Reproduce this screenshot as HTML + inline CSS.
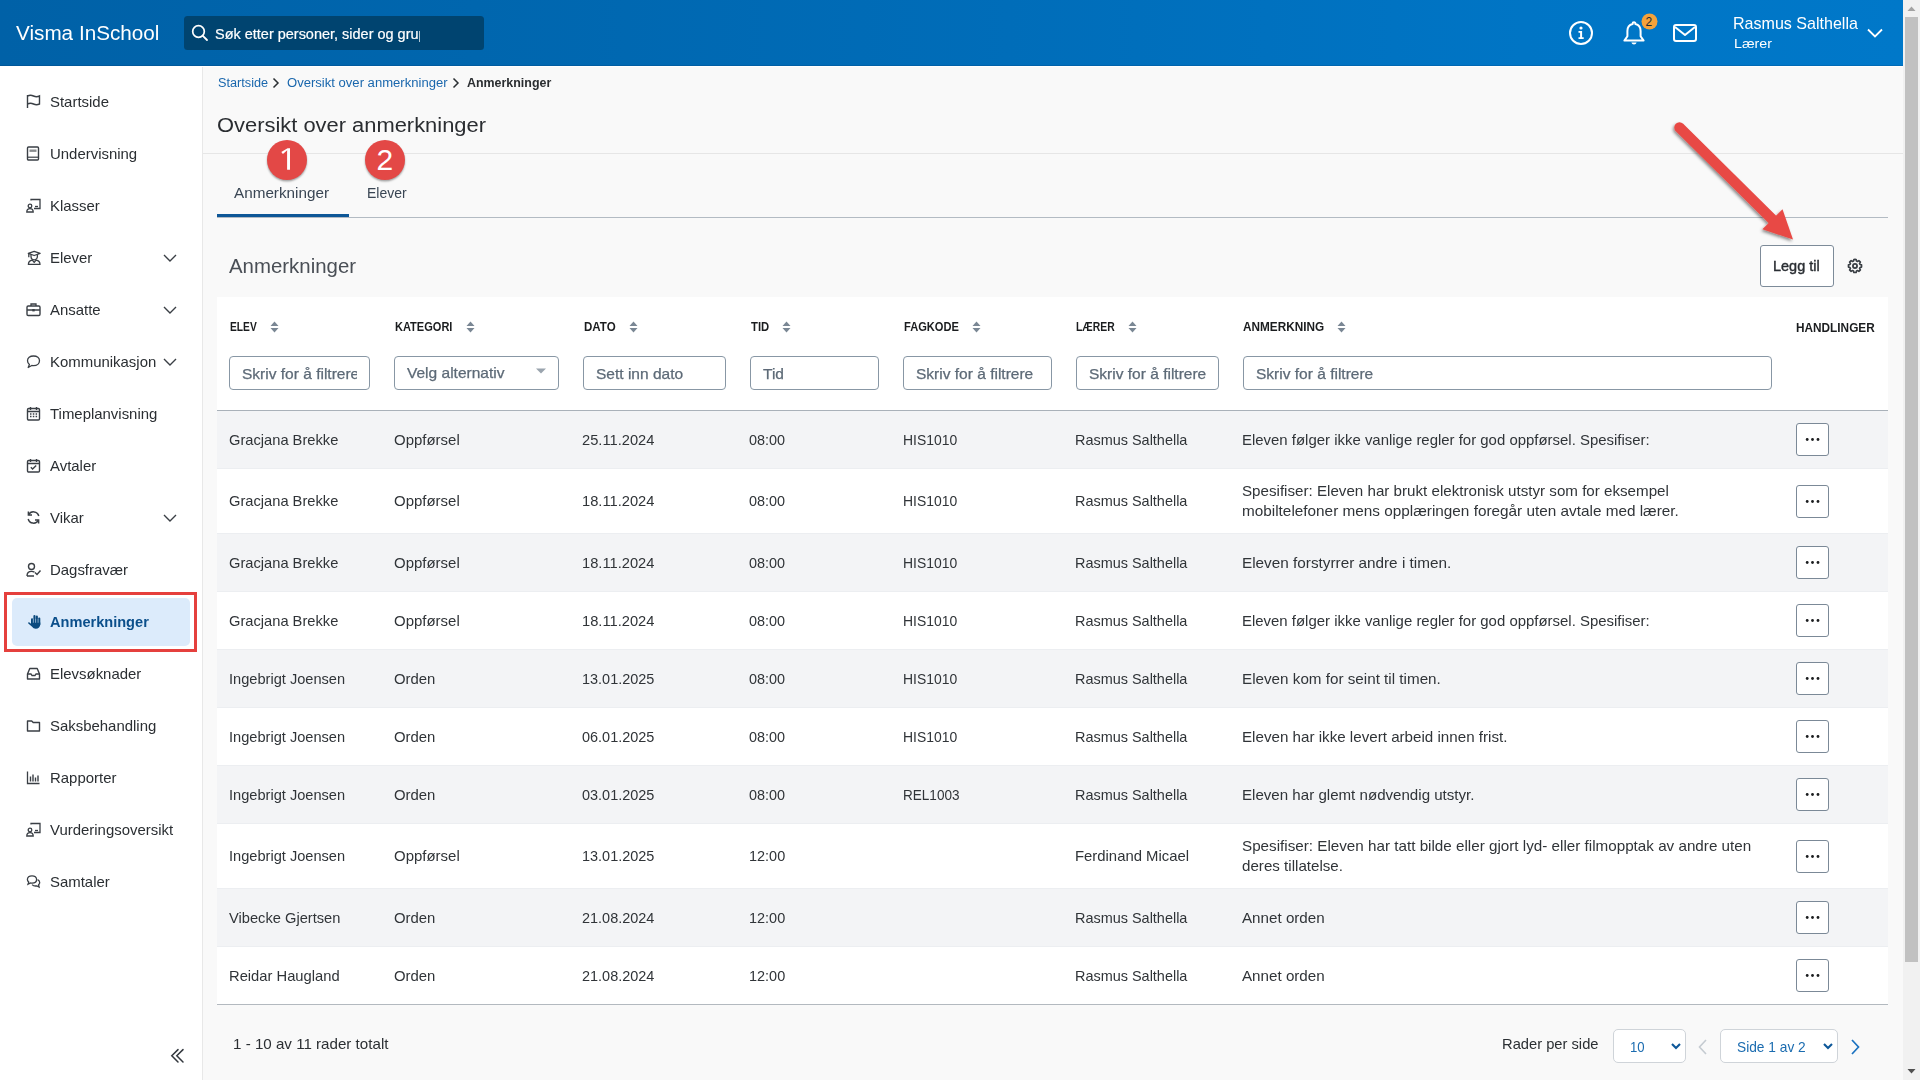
<!DOCTYPE html>
<html><head><meta charset="utf-8"><title>Anmerkninger</title>
<style>
html,body{margin:0;padding:0;width:1920px;height:1080px;overflow:hidden;background:#f9f9f9;font-family:"Liberation Sans", sans-serif;}
.t{position:absolute;white-space:nowrap;line-height:1;font-family:"Liberation Sans", sans-serif;}
.r{position:absolute;display:block;}
</style></head><body>
<div class="r" style="left:0px;top:0px;width:1903px;height:66px;background:linear-gradient(90deg,#0061a7 0%,#0066ae 25%,#006db9 53%,#0075c5 80%,#0078c9 100%);"></div>
<div class="t" style="left:15.55px;top:23.42px;font-size:20.76px;color:#ffffff;font-weight:400;transform:scaleX(0.9975);transform-origin:0 0;">Visma InSchool</div>
<div class="r" style="left:184px;top:16px;width:300px;height:34px;background:#004470;border-radius:3.5px;"></div>
<svg class="r" style="left:191px;top:24px;" width="18" height="18" viewBox="0 0 18 18"><circle cx="7.5" cy="7.5" r="5.8" fill="none" stroke="#fff" stroke-width="1.7"/><line x1="11.6" y1="11.6" x2="16" y2="16" stroke="#fff" stroke-width="1.8" stroke-linecap="round"/></svg>
<div class="r" style="left:184px;top:16px;width:236px;height:34px;overflow:hidden;">
<div class="t" style="left:31.10px;top:10.72px;font-size:14.5px;color:#fff;font-weight:400;transform:scaleX(0.9980);transform-origin:0 0;-webkit-text-stroke:.2px #fff;">Søk etter personer, sider og grupper</div>
</div>
<svg class="r" style="left:1568px;top:20px;" width="26" height="26" viewBox="0 0 26 26"><circle cx="13" cy="13" r="11" fill="none" stroke="#fff" stroke-width="2"/><circle cx="13" cy="8" r="1.6" fill="#fff"/><path d="M10.5 11h3.6v6.2h1.6v1.8h-5.2v-1.8h1.6v-4.4h-1.6z" fill="#fff"/></svg>
<svg class="r" style="left:1621px;top:19px;" width="26" height="28" viewBox="0 0 26 28"><path d="M13 3.2c-.9 0-1.4.6-1.4 1.3v.5C8.3 5.8 6.4 8.6 6.4 12v5.2L3.4 21.6h19.2l-3-4.4V12c0-3.4-1.9-6.2-5.2-7v-.5c0-.7-.5-1.3-1.4-1.3z" fill="none" stroke="#fff" stroke-width="2" stroke-linejoin="round"/><path d="M10.4 23.6h5.2c-.4 1.2-1.4 2-2.6 2s-2.2-.8-2.6-2z" fill="#fff"/></svg>
<svg class="r" style="left:1641px;top:13px;" width="17" height="17" viewBox="0 0 17 17"><circle cx="8.5" cy="8.5" r="8" fill="#f5a23a"/></svg>
<div class="t" style="left:1645.50px;top:16.34px;font-size:12px;color:#1e2a36;font-weight:400;">2</div>
<svg class="r" style="left:1672px;top:23px;" width="26" height="20" viewBox="0 0 26 20"><rect x="2" y="2" width="22" height="16" rx="2" fill="none" stroke="#fff" stroke-width="2"/><path d="M3 4l10 8 10-8" fill="none" stroke="#fff" stroke-width="2" stroke-linejoin="round"/></svg>
<div class="t" style="left:1733.30px;top:15.54px;font-size:16.6px;color:#fff;font-weight:400;transform:scaleX(0.9676);transform-origin:0 0;">Rasmus Salthella</div>
<div class="t" style="left:1733.80px;top:37.48px;font-size:13.6px;color:#fff;font-weight:400;transform:scaleX(1.0473);transform-origin:0 0;">Lærer</div>
<svg class="r" style="left:1866px;top:27px;" width="18" height="12" viewBox="0 0 18 12"><path d="M2 2.5l7 7 7-7" fill="none" stroke="#fff" stroke-width="1.8"/></svg>
<div class="r" style="left:0px;top:65px;width:1903px;height:1px;background:rgba(0,20,60,.12);"></div>
<div class="r" style="left:1903px;top:0px;width:17px;height:1080px;background:#f1f1f1;"></div>
<div class="r" style="left:1905px;top:17px;width:13px;height:945px;background:#c1c1c1;"></div>
<svg class="r" style="left:1903px;top:0px;" width="17" height="17" viewBox="0 0 17 17"><path d="M4.5 11h8L8.5 6.5z" fill="#a3a3a3"/></svg>
<svg class="r" style="left:1903px;top:1063px;" width="17" height="17" viewBox="0 0 17 17"><path d="M4.5 6h8L8.5 10.5z" fill="#505050"/></svg>
<div class="r" style="left:0px;top:66px;width:202px;height:1014px;background:#ffffff;"></div>
<div class="r" style="left:202px;top:66px;width:1px;height:1014px;background:#e8e8e8;"></div>
<div class="r" style="left:12px;top:598px;width:178px;height:48px;background:#dcebfb;border-radius:5px;"></div>
<svg class="r" style="left:26px;top:94px;" width="16" height="16" viewBox="0 0 16 16"><path d="M1.5 1v13M1.5 2c2-1 4-1 6 0s4 1 6 0v8c-2 1-4 1-6 0s-4-1-6 0" fill="none" stroke="#3a3f45" stroke-width="1.4"/></svg>
<div class="t" style="left:49.70px;top:94.92px;font-size:14.5px;color:#2b2f33;font-weight:400;transform:scaleX(1.0300);transform-origin:0 0;">Startside</div>
<svg class="r" style="left:26px;top:146px;" width="16" height="16" viewBox="0 0 16 16"><rect x="1.5" y="1" width="11" height="13" rx="1" fill="none" stroke="#3a3f45" stroke-width="1.4"/><path d="M1.5 11.2h11" stroke="#3a3f45" stroke-width="1.2"/><rect x="3.5" y="3.5" width="7" height="2.4" fill="#3a3f45" opacity=".6"/></svg>
<div class="t" style="left:49.70px;top:146.92px;font-size:14.5px;color:#2b2f33;font-weight:400;transform:scaleX(1.0300);transform-origin:0 0;">Undervisning</div>
<svg class="r" style="left:26px;top:198px;" width="16" height="16" viewBox="0 0 16 16"><path d="M5 2.5V1.5h9v9H8" fill="none" stroke="#3a3f45" stroke-width="1.3"/><path d="M9 8.5h3" stroke="#3a3f45" stroke-width="1.3"/><circle cx="4" cy="8" r="1.8" fill="none" stroke="#3a3f45" stroke-width="1.3"/><path d="M.8 14c0-2.4 1.4-3.4 3.2-3.4s3.2 1 3.2 3.4z" fill="none" stroke="#3a3f45" stroke-width="1.3"/></svg>
<div class="t" style="left:49.70px;top:198.92px;font-size:14.5px;color:#2b2f33;font-weight:400;transform:scaleX(1.0300);transform-origin:0 0;">Klasser</div>
<svg class="r" style="left:26px;top:250px;" width="16" height="16" viewBox="0 0 16 16"><path d="M2.3 3.4L8.2 1.3l5.9 2.1-5.9 2.1z" fill="none" stroke="#3a3f45" stroke-width="1.3" stroke-linejoin="round"/><path d="M2.8 3.6v3.6" stroke="#3a3f45" stroke-width="1.3"/><path d="M5 5v1.6a3.2 3.2 0 0 0 6.4 0V5" fill="none" stroke="#3a3f45" stroke-width="1.3"/><path d="M2.4 14.4c0-2.6 1.8-4 3.9-4.3l1.9 2.3 1.9-2.3c2.1.3 3.9 1.7 3.9 4.3z" fill="none" stroke="#3a3f45" stroke-width="1.3" stroke-linejoin="round"/></svg>
<div class="t" style="left:49.70px;top:250.92px;font-size:14.5px;color:#2b2f33;font-weight:400;transform:scaleX(1.0300);transform-origin:0 0;">Elever</div>
<svg class="r" style="left:161px;top:252px;" width="18" height="12" viewBox="0 0 18 12"><path d="M3 3l6 6 6-6" fill="none" stroke="#3a3f45" stroke-width="1.4"/></svg>
<svg class="r" style="left:26px;top:302px;" width="16" height="16" viewBox="0 0 16 16"><rect x="1" y="4" width="13" height="9.5" rx="1.2" fill="none" stroke="#3a3f45" stroke-width="1.4"/><path d="M5 4V2h5v2M1 8h13" fill="none" stroke="#3a3f45" stroke-width="1.3"/><rect x="6.3" y="7" width="2.4" height="2.4" fill="#3a3f45"/></svg>
<div class="t" style="left:49.70px;top:302.92px;font-size:14.5px;color:#2b2f33;font-weight:400;transform:scaleX(1.0300);transform-origin:0 0;">Ansatte</div>
<svg class="r" style="left:161px;top:304px;" width="18" height="12" viewBox="0 0 18 12"><path d="M3 3l6 6 6-6" fill="none" stroke="#3a3f45" stroke-width="1.4"/></svg>
<svg class="r" style="left:26px;top:354px;" width="16" height="16" viewBox="0 0 16 16"><path d="M7.5 2C3.9 2 1.5 4 1.5 6.8c0 1.5.7 2.7 1.9 3.6L2.2 13.5l3.6-2c.5.1 1.1.2 1.7.2 3.6 0 6-2.1 6-4.9S11.1 2 7.5 2z" fill="none" stroke="#3a3f45" stroke-width="1.3" stroke-linejoin="round"/></svg>
<div class="t" style="left:49.70px;top:354.92px;font-size:14.5px;color:#2b2f33;font-weight:400;transform:scaleX(1.0300);transform-origin:0 0;">Kommunikasjon</div>
<svg class="r" style="left:161px;top:356px;" width="18" height="12" viewBox="0 0 18 12"><path d="M3 3l6 6 6-6" fill="none" stroke="#3a3f45" stroke-width="1.4"/></svg>
<svg class="r" style="left:26px;top:406px;" width="16" height="16" viewBox="0 0 16 16"><rect x="1.5" y="2.5" width="12" height="11.5" rx="1.2" fill="none" stroke="#3a3f45" stroke-width="1.4"/><path d="M4.5 1v3M10.5 1v3M1.5 5.5h12" stroke="#3a3f45" stroke-width="1.4"/><path d="M4 8h1.5M6.8 8h1.5M9.6 8h1.5M4 10.5h1.5M6.8 10.5h1.5M9.6 10.5h1.5" stroke="#3a3f45" stroke-width="1.3"/></svg>
<div class="t" style="left:49.70px;top:406.92px;font-size:14.5px;color:#2b2f33;font-weight:400;transform:scaleX(1.0300);transform-origin:0 0;">Timeplanvisning</div>
<svg class="r" style="left:26px;top:458px;" width="16" height="16" viewBox="0 0 16 16"><rect x="1.5" y="2.5" width="12" height="11.5" rx="1.2" fill="none" stroke="#3a3f45" stroke-width="1.4"/><path d="M4.5 1v3M10.5 1v3M1.5 5.5h12" stroke="#3a3f45" stroke-width="1.4"/><path d="M4.8 9.3l1.8 1.8 3.6-3.6" fill="none" stroke="#3a3f45" stroke-width="1.4"/></svg>
<div class="t" style="left:49.70px;top:458.92px;font-size:14.5px;color:#2b2f33;font-weight:400;transform:scaleX(1.0300);transform-origin:0 0;">Avtaler</div>
<svg class="r" style="left:26px;top:510px;" width="16" height="16" viewBox="0 0 16 16"><path d="M12.8 6A5.5 5.5 0 0 0 2.6 4.8M2.2 9a5.5 5.5 0 0 0 10.2 1.2" fill="none" stroke="#3a3f45" stroke-width="1.5"/><path d="M2.4 1.5v3.6H6M12.6 13.5V9.9H9" fill="none" stroke="#3a3f45" stroke-width="1.5"/></svg>
<div class="t" style="left:49.70px;top:510.92px;font-size:14.5px;color:#2b2f33;font-weight:400;transform:scaleX(1.0300);transform-origin:0 0;">Vikar</div>
<svg class="r" style="left:161px;top:512px;" width="18" height="12" viewBox="0 0 18 12"><path d="M3 3l6 6 6-6" fill="none" stroke="#3a3f45" stroke-width="1.4"/></svg>
<svg class="r" style="left:26px;top:562px;" width="16" height="16" viewBox="0 0 16 16"><circle cx="5.5" cy="4.5" r="3" fill="none" stroke="#3a3f45" stroke-width="1.4"/><path d="M1 14c0-3 2-4.6 4.5-4.6 1.2 0 2.3.3 3 .9M1 14h7" fill="none" stroke="#3a3f45" stroke-width="1.4"/><path d="M9 10.5l2 2 3.5-4" fill="none" stroke="#3a3f45" stroke-width="1.4"/></svg>
<div class="t" style="left:49.70px;top:562.92px;font-size:14.5px;color:#2b2f33;font-weight:400;transform:scaleX(1.0300);transform-origin:0 0;">Dagsfravær</div>
<svg class="r" style="left:26px;top:614px;" width="16" height="16" viewBox="0 0 16 16"><g fill="#0b4a7e"><rect x="5" y="4.2" width="2.1" height="7" rx="1.05"/><rect x="7.4" y="1" width="2.1" height="10" rx="1.05"/><rect x="9.8" y="1.6" width="2.1" height="9.5" rx="1.05"/><rect x="12.2" y="3.6" width="2.1" height="8" rx="1.05"/><path d="M5 8.5h9.3v1.8c0 2.7-1.9 4.5-4.5 4.5-1.7 0-2.8-.8-3.7-2L2.3 9.6c-.5-.6.3-1.6 1.1-1.1L5 9.8z"/></g><path d="M7.25 5v4M9.65 5v4M12.05 5v4" stroke="#dcebfb" stroke-width=".35"/></svg>
<div class="t" style="left:49.50px;top:614.92px;font-size:14.5px;color:#0b4f8b;font-weight:700;transform:scaleX(1.0051);transform-origin:0 0;">Anmerkninger</div>
<svg class="r" style="left:26px;top:666px;" width="16" height="16" viewBox="0 0 16 16"><path d="M1.5 8l2.3-5.5h7.4L13.5 8v5H1.5z" fill="none" stroke="#3a3f45" stroke-width="1.4" stroke-linejoin="round"/><path d="M1.5 8h3.5l1 1.5h3l1-1.5h3.5" fill="none" stroke="#3a3f45" stroke-width="1.3"/></svg>
<div class="t" style="left:49.70px;top:666.92px;font-size:14.5px;color:#2b2f33;font-weight:400;transform:scaleX(1.0300);transform-origin:0 0;">Elevsøknader</div>
<svg class="r" style="left:26px;top:718px;" width="16" height="16" viewBox="0 0 16 16"><path d="M1.5 3h4.2l1.5 1.5h6.3v8.5h-12z" fill="none" stroke="#3a3f45" stroke-width="1.4" stroke-linejoin="round"/></svg>
<div class="t" style="left:49.70px;top:718.92px;font-size:14.5px;color:#2b2f33;font-weight:400;transform:scaleX(1.0300);transform-origin:0 0;">Saksbehandling</div>
<svg class="r" style="left:26px;top:770px;" width="16" height="16" viewBox="0 0 16 16"><path d="M1.5 1.5v12h12" fill="none" stroke="#3a3f45" stroke-width="1.3"/><path d="M4.5 6.5v5M7 4.5v7M9.5 7.5v4M12 5.5v6" stroke="#3a3f45" stroke-width="1.4"/></svg>
<div class="t" style="left:49.70px;top:770.92px;font-size:14.5px;color:#2b2f33;font-weight:400;transform:scaleX(1.0300);transform-origin:0 0;">Rapporter</div>
<svg class="r" style="left:26px;top:822px;" width="16" height="16" viewBox="0 0 16 16"><path d="M5 2.5V1.5h9v9H8" fill="none" stroke="#3a3f45" stroke-width="1.3"/><path d="M9 8.5h3" stroke="#3a3f45" stroke-width="1.3"/><circle cx="4" cy="8" r="1.8" fill="none" stroke="#3a3f45" stroke-width="1.3"/><path d="M.8 14c0-2.4 1.4-3.4 3.2-3.4s3.2 1 3.2 3.4z" fill="none" stroke="#3a3f45" stroke-width="1.3"/></svg>
<div class="t" style="left:49.70px;top:822.92px;font-size:14.5px;color:#2b2f33;font-weight:400;transform:scaleX(1.0300);transform-origin:0 0;">Vurderingsoversikt</div>
<svg class="r" style="left:26px;top:874px;" width="16" height="16" viewBox="0 0 16 16"><path d="M6 1.8c-2.8 0-4.6 1.6-4.6 3.7 0 1 .5 1.9 1.3 2.6l-.7 2.2 2.6-1.3c.4.1.9.2 1.4.2 2.8 0 4.6-1.6 4.6-3.7S8.8 1.8 6 1.8z" fill="none" stroke="#3a3f45" stroke-width="1.3"/><path d="M11.6 5.6c1.3.6 2.1 1.7 2.1 2.9 0 .9-.4 1.7-1.1 2.3l.5 2.2-2.2-1.1c-.4.1-.8.1-1.2.1-1.5 0-2.8-.5-3.6-1.4" fill="none" stroke="#3a3f45" stroke-width="1.3"/></svg>
<div class="t" style="left:49.70px;top:874.92px;font-size:14.5px;color:#2b2f33;font-weight:400;transform:scaleX(1.0300);transform-origin:0 0;">Samtaler</div>
<div class="r" style="left:4px;top:592px;width:193px;height:60px;border:3px solid #e5403d;box-sizing:border-box;"></div>
<svg class="r" style="left:168px;top:1046px;" width="20" height="20" viewBox="0 0 20 20"><path d="M10 3.6l-6.2 6.2 6.2 6.2M15 3.6l-6.2 6.2 6.2 6.2" fill="none" stroke="#33383e" stroke-width="1.5" stroke-linecap="round"/></svg>
<div class="r" style="left:203px;top:66px;width:1700px;height:1014px;background:#f9f9f9;"></div>
<div class="r" style="left:0px;top:66px;width:1903px;height:1px;background:#ffffff;"></div>
<div class="t" style="left:217.70px;top:76.70px;font-size:12.45px;color:#1a67ad;font-weight:400;transform:scaleX(1.0198);transform-origin:0 0;">Startside</div>
<svg class="r" style="left:271px;top:77px;" width="10" height="12" viewBox="0 0 10 12"><path d="M2.5 1.5l4.5 4.5-4.5 4.5" fill="none" stroke="#2b2f33" stroke-width="1.5"/></svg>
<div class="t" style="left:287.10px;top:76.70px;font-size:12.45px;color:#1a67ad;font-weight:400;transform:scaleX(1.0509);transform-origin:0 0;">Oversikt over anmerkninger</div>
<svg class="r" style="left:451px;top:77px;" width="10" height="12" viewBox="0 0 10 12"><path d="M2.5 1.5l4.5 4.5-4.5 4.5" fill="none" stroke="#2b2f33" stroke-width="1.5"/></svg>
<div class="t" style="left:466.60px;top:76.70px;font-size:12.45px;color:#2a2d30;font-weight:700;transform:scaleX(0.9988);transform-origin:0 0;">Anmerkninger</div>
<div class="t" style="left:217.20px;top:115.02px;font-size:20.76px;color:#2a2d31;font-weight:400;transform:scaleX(1.0554);transform-origin:0 0;">Oversikt over anmerkninger</div>
<div class="r" style="left:203px;top:153px;width:1700px;height:1px;background:#e6e6e6;"></div>
<div class="t" style="left:234.30px;top:185.52px;font-size:14.5px;color:#3a4654;font-weight:400;transform:scaleX(1.0525);transform-origin:0 0;">Anmerkninger</div>
<div class="t" style="left:366.50px;top:185.52px;font-size:14.5px;color:#3a4654;font-weight:400;transform:scaleX(0.9658);transform-origin:0 0;">Elever</div>
<div class="r" style="left:217px;top:217px;width:1671px;height:1px;background:#b3bbc3;"></div>
<div class="r" style="left:217px;top:214px;width:132px;height:3px;background:#0e5797;"></div>
<div class="t" style="left:228.90px;top:255.52px;font-size:20.76px;color:#4a4f56;font-weight:400;transform:scaleX(0.9835);transform-origin:0 0;">Anmerkninger</div>
<div class="r" style="left:1760px;top:245px;width:74px;height:42px;background:#fff;border:1px solid #7d8b99;border-radius:3px;box-sizing:border-box;"></div>
<div class="t" style="left:1773.05px;top:258.52px;font-size:14.5px;color:#2a2e33;font-weight:400;transform:scaleX(0.9976);transform-origin:0 0;-webkit-text-stroke:.4px #2a2e33;">Legg til</div>
<svg class="r" style="left:1846px;top:257px;" width="18" height="18" viewBox="0 0 18 18"><g transform="translate(9 9) scale(.86) translate(-9 -9)"><path d="M9 1.2l1.3.2.4 1.8 1.2.5 1.6-1 1.8 1.8-1 1.6.5 1.2 1.8.4v2.6l-1.8.4-.5 1.2 1 1.6-1.8 1.8-1.6-1-1.2.5-.4 1.8H7.7l-.4-1.8-1.2-.5-1.6 1-1.8-1.8 1-1.6-.5-1.2-1.8-.4V7.7l1.8-.4.5-1.2-1-1.6 1.8-1.8 1.6 1 1.2-.5.4-1.8z" fill="none" stroke="#3a3f45" stroke-width="1.9" stroke-linejoin="round"/><circle cx="9" cy="9" r="2.4" fill="none" stroke="#3a3f45" stroke-width="2.1"/></g></svg>
<div class="r" style="left:217px;top:297px;width:1671px;height:707px;background:#fff;"></div>
<div class="r" style="left:217px;top:410px;width:1671px;height:1px;background:#a9b1b9;"></div>
<div class="r" style="left:217px;top:1004px;width:1671px;height:1px;background:#b3b9bf;"></div>
<div class="t" style="left:229.70px;top:320.70px;font-size:12.45px;color:#1b1d1f;font-weight:700;transform:scaleX(0.8241);transform-origin:0 0;">ELEV</div>
<svg class="r" style="left:269px;top:320px;" width="11" height="14" viewBox="0 0 11 14"><path d="M1.5 6L5.5 1.5 9.5 6z M1.5 8L5.5 12.5 9.5 8z" fill="#7a8794"/></svg>
<div class="t" style="left:395.30px;top:320.70px;font-size:12.45px;color:#1b1d1f;font-weight:700;transform:scaleX(0.8875);transform-origin:0 0;">KATEGORI</div>
<svg class="r" style="left:465px;top:320px;" width="11" height="14" viewBox="0 0 11 14"><path d="M1.5 6L5.5 1.5 9.5 6z M1.5 8L5.5 12.5 9.5 8z" fill="#7a8794"/></svg>
<div class="t" style="left:583.70px;top:320.70px;font-size:12.45px;color:#1b1d1f;font-weight:700;transform:scaleX(0.9289);transform-origin:0 0;">DATO</div>
<svg class="r" style="left:628px;top:320px;" width="11" height="14" viewBox="0 0 11 14"><path d="M1.5 6L5.5 1.5 9.5 6z M1.5 8L5.5 12.5 9.5 8z" fill="#7a8794"/></svg>
<div class="t" style="left:750.60px;top:320.70px;font-size:12.45px;color:#1b1d1f;font-weight:700;transform:scaleX(0.9074);transform-origin:0 0;">TID</div>
<svg class="r" style="left:781px;top:320px;" width="11" height="14" viewBox="0 0 11 14"><path d="M1.5 6L5.5 1.5 9.5 6z M1.5 8L5.5 12.5 9.5 8z" fill="#7a8794"/></svg>
<div class="t" style="left:904.30px;top:320.70px;font-size:12.45px;color:#1b1d1f;font-weight:700;transform:scaleX(0.8934);transform-origin:0 0;">FAGKODE</div>
<svg class="r" style="left:971px;top:320px;" width="11" height="14" viewBox="0 0 11 14"><path d="M1.5 6L5.5 1.5 9.5 6z M1.5 8L5.5 12.5 9.5 8z" fill="#7a8794"/></svg>
<div class="t" style="left:1076.20px;top:320.70px;font-size:12.45px;color:#1b1d1f;font-weight:700;transform:scaleX(0.8352);transform-origin:0 0;">LÆRER</div>
<svg class="r" style="left:1127px;top:320px;" width="11" height="14" viewBox="0 0 11 14"><path d="M1.5 6L5.5 1.5 9.5 6z M1.5 8L5.5 12.5 9.5 8z" fill="#7a8794"/></svg>
<div class="t" style="left:1243.05px;top:320.70px;font-size:12.45px;color:#1b1d1f;font-weight:700;transform:scaleX(0.9473);transform-origin:0 0;">ANMERKNING</div>
<svg class="r" style="left:1336px;top:320px;" width="11" height="14" viewBox="0 0 11 14"><path d="M1.5 6L5.5 1.5 9.5 6z M1.5 8L5.5 12.5 9.5 8z" fill="#7a8794"/></svg>
<div class="t" style="left:1796.30px;top:322.45px;font-size:12.45px;color:#1b1d1f;font-weight:700;transform:scaleX(0.9494);transform-origin:0 0;">HANDLINGER</div>
<div class="r" style="left:229px;top:356px;width:141px;height:34px;background:#fff;border:1px solid #8897a5;border-radius:4px;box-sizing:border-box;"></div>
<div class="r" style="left:230px;top:357px;width:127px;height:32px;overflow:hidden;">
<div class="t" style="left:11.80px;top:9.62px;font-size:14.5px;color:#5d6a77;font-weight:400;transform:scaleX(1.0700);transform-origin:0 0;-webkit-text-stroke:.25px #5d6a77;">Skriv for å filtrere</div>
</div>
<div class="r" style="left:394px;top:356px;width:165px;height:34px;background:#fff;border:1px solid #8897a5;border-radius:4px;box-sizing:border-box;"></div>
<div class="r" style="left:395px;top:357px;width:151px;height:32px;overflow:hidden;">
<div class="t" style="left:11.60px;top:8.62px;font-size:14.5px;color:#5d6a77;font-weight:400;transform:scaleX(1.0700);transform-origin:0 0;-webkit-text-stroke:.25px #5d6a77;">Velg alternativ</div>
</div>
<div class="r" style="left:583px;top:356px;width:143px;height:34px;background:#fff;border:1px solid #8897a5;border-radius:4px;box-sizing:border-box;"></div>
<div class="r" style="left:584px;top:357px;width:129px;height:32px;overflow:hidden;">
<div class="t" style="left:11.80px;top:9.62px;font-size:14.5px;color:#5d6a77;font-weight:400;transform:scaleX(1.0700);transform-origin:0 0;-webkit-text-stroke:.25px #5d6a77;">Sett inn dato</div>
</div>
<div class="r" style="left:750px;top:356px;width:129px;height:34px;background:#fff;border:1px solid #8897a5;border-radius:4px;box-sizing:border-box;"></div>
<div class="r" style="left:751px;top:357px;width:115px;height:32px;overflow:hidden;">
<div class="t" style="left:11.80px;top:9.62px;font-size:14.5px;color:#5d6a77;font-weight:400;transform:scaleX(1.0700);transform-origin:0 0;-webkit-text-stroke:.25px #5d6a77;">Tid</div>
</div>
<div class="r" style="left:903px;top:356px;width:149px;height:34px;background:#fff;border:1px solid #8897a5;border-radius:4px;box-sizing:border-box;"></div>
<div class="r" style="left:904px;top:357px;width:135px;height:32px;overflow:hidden;">
<div class="t" style="left:11.80px;top:9.62px;font-size:14.5px;color:#5d6a77;font-weight:400;transform:scaleX(1.0700);transform-origin:0 0;-webkit-text-stroke:.25px #5d6a77;">Skriv for å filtrere</div>
</div>
<div class="r" style="left:1076px;top:356px;width:143px;height:34px;background:#fff;border:1px solid #8897a5;border-radius:4px;box-sizing:border-box;"></div>
<div class="r" style="left:1077px;top:357px;width:129px;height:32px;overflow:hidden;">
<div class="t" style="left:11.80px;top:9.62px;font-size:14.5px;color:#5d6a77;font-weight:400;transform:scaleX(1.0700);transform-origin:0 0;-webkit-text-stroke:.25px #5d6a77;">Skriv for å filtrere</div>
</div>
<div class="r" style="left:1243px;top:356px;width:529px;height:34px;background:#fff;border:1px solid #8897a5;border-radius:4px;box-sizing:border-box;"></div>
<div class="r" style="left:1244px;top:357px;width:515px;height:32px;overflow:hidden;">
<div class="t" style="left:11.80px;top:9.62px;font-size:14.5px;color:#5d6a77;font-weight:400;transform:scaleX(1.0700);transform-origin:0 0;-webkit-text-stroke:.25px #5d6a77;">Skriv for å filtrere</div>
</div>
<svg class="r" style="left:534px;top:366px;" width="14" height="10" viewBox="0 0 14 10"><path d="M2 2.5h10L7 7.5z" fill="#9aa4ae"/></svg>
<div class="r" style="left:217px;top:411px;width:1671px;height:57px;background:#f3f4f6;"></div>
<div class="r" style="left:217px;top:468px;width:1671px;height:1px;background:#eceef1;"></div>
<div class="t" style="left:228.50px;top:432.82px;font-size:14.5px;color:#303438;font-weight:400;transform:scaleX(1.0121);transform-origin:0 0;">Gracjana Brekke</div>
<div class="t" style="left:394.00px;top:432.82px;font-size:14.5px;color:#303438;font-weight:400;transform:scaleX(1.0321);transform-origin:0 0;">Oppførsel</div>
<div class="t" style="left:582.20px;top:432.82px;font-size:14.5px;color:#303438;font-weight:400;transform:scaleX(1.0126);transform-origin:0 0;">25.11.2024</div>
<div class="t" style="left:749.20px;top:432.82px;font-size:14.5px;color:#303438;font-weight:400;transform:scaleX(0.9951);transform-origin:0 0;">08:00</div>
<div class="t" style="left:903.10px;top:432.82px;font-size:14.5px;color:#303438;font-weight:400;transform:scaleX(0.9604);transform-origin:0 0;">HIS1010</div>
<div class="t" style="left:1075.30px;top:432.82px;font-size:14.5px;color:#303438;font-weight:400;transform:scaleX(0.9961);transform-origin:0 0;">Rasmus Salthella</div>
<div class="t" style="left:1242.00px;top:432.82px;font-size:14.5px;color:#303438;font-weight:400;transform:scaleX(1.0303);transform-origin:0 0;">Eleven følger ikke vanlige regler for god oppførsel. Spesifiser:</div>
<div class="r" style="left:1796px;top:423.1px;width:33px;height:33px;background:#fff;border:1px solid #7b8997;border-radius:3px;box-sizing:border-box;"></div>
<svg class="r" style="left:1804px;top:437.1px;" width="17" height="5" viewBox="0 0 17 5"><circle cx="3.2" cy="2.5" r="1.4" fill="#1b1d1f"/><circle cx="8.5" cy="2.5" r="1.4" fill="#1b1d1f"/><circle cx="14" cy="2.5" r="1.4" fill="#1b1d1f"/></svg>
<div class="r" style="left:217px;top:533px;width:1671px;height:1px;background:#eceef1;"></div>
<div class="t" style="left:228.50px;top:494.32px;font-size:14.5px;color:#303438;font-weight:400;transform:scaleX(1.0121);transform-origin:0 0;">Gracjana Brekke</div>
<div class="t" style="left:394.00px;top:494.32px;font-size:14.5px;color:#303438;font-weight:400;transform:scaleX(1.0321);transform-origin:0 0;">Oppførsel</div>
<div class="t" style="left:582.20px;top:494.32px;font-size:14.5px;color:#303438;font-weight:400;transform:scaleX(1.0126);transform-origin:0 0;">18.11.2024</div>
<div class="t" style="left:749.20px;top:494.32px;font-size:14.5px;color:#303438;font-weight:400;transform:scaleX(0.9951);transform-origin:0 0;">08:00</div>
<div class="t" style="left:903.10px;top:494.32px;font-size:14.5px;color:#303438;font-weight:400;transform:scaleX(0.9604);transform-origin:0 0;">HIS1010</div>
<div class="t" style="left:1075.30px;top:494.32px;font-size:14.5px;color:#303438;font-weight:400;transform:scaleX(0.9961);transform-origin:0 0;">Rasmus Salthella</div>
<div class="t" style="left:1242.00px;top:483.92px;font-size:14.5px;color:#303438;font-weight:400;transform:scaleX(1.0448);transform-origin:0 0;">Spesifiser: Eleven har brukt elektronisk utstyr som for eksempel</div>
<div class="t" style="left:1242.00px;top:504.22px;font-size:14.5px;color:#303438;font-weight:400;transform:scaleX(1.0566);transform-origin:0 0;">mobiltelefoner mens opplæringen foregår uten avtale med lærer.</div>
<div class="r" style="left:1796px;top:485.20000000000005px;width:33px;height:33px;background:#fff;border:1px solid #7b8997;border-radius:3px;box-sizing:border-box;"></div>
<svg class="r" style="left:1804px;top:499.20000000000005px;" width="17" height="5" viewBox="0 0 17 5"><circle cx="3.2" cy="2.5" r="1.4" fill="#1b1d1f"/><circle cx="8.5" cy="2.5" r="1.4" fill="#1b1d1f"/><circle cx="14" cy="2.5" r="1.4" fill="#1b1d1f"/></svg>
<div class="r" style="left:217px;top:534px;width:1671px;height:57px;background:#f3f4f6;"></div>
<div class="r" style="left:217px;top:591px;width:1671px;height:1px;background:#eceef1;"></div>
<div class="t" style="left:228.50px;top:555.82px;font-size:14.5px;color:#303438;font-weight:400;transform:scaleX(1.0121);transform-origin:0 0;">Gracjana Brekke</div>
<div class="t" style="left:394.00px;top:555.82px;font-size:14.5px;color:#303438;font-weight:400;transform:scaleX(1.0321);transform-origin:0 0;">Oppførsel</div>
<div class="t" style="left:582.20px;top:555.82px;font-size:14.5px;color:#303438;font-weight:400;transform:scaleX(1.0126);transform-origin:0 0;">18.11.2024</div>
<div class="t" style="left:749.20px;top:555.82px;font-size:14.5px;color:#303438;font-weight:400;transform:scaleX(0.9951);transform-origin:0 0;">08:00</div>
<div class="t" style="left:903.10px;top:555.82px;font-size:14.5px;color:#303438;font-weight:400;transform:scaleX(0.9604);transform-origin:0 0;">HIS1010</div>
<div class="t" style="left:1075.30px;top:555.82px;font-size:14.5px;color:#303438;font-weight:400;transform:scaleX(0.9961);transform-origin:0 0;">Rasmus Salthella</div>
<div class="t" style="left:1242.00px;top:555.82px;font-size:14.5px;color:#303438;font-weight:400;transform:scaleX(1.0553);transform-origin:0 0;">Eleven forstyrrer andre i timen.</div>
<div class="r" style="left:1796px;top:546.1px;width:33px;height:33px;background:#fff;border:1px solid #7b8997;border-radius:3px;box-sizing:border-box;"></div>
<svg class="r" style="left:1804px;top:560.1px;" width="17" height="5" viewBox="0 0 17 5"><circle cx="3.2" cy="2.5" r="1.4" fill="#1b1d1f"/><circle cx="8.5" cy="2.5" r="1.4" fill="#1b1d1f"/><circle cx="14" cy="2.5" r="1.4" fill="#1b1d1f"/></svg>
<div class="r" style="left:217px;top:649px;width:1671px;height:1px;background:#eceef1;"></div>
<div class="t" style="left:228.50px;top:613.82px;font-size:14.5px;color:#303438;font-weight:400;transform:scaleX(1.0121);transform-origin:0 0;">Gracjana Brekke</div>
<div class="t" style="left:394.00px;top:613.82px;font-size:14.5px;color:#303438;font-weight:400;transform:scaleX(1.0321);transform-origin:0 0;">Oppførsel</div>
<div class="t" style="left:582.20px;top:613.82px;font-size:14.5px;color:#303438;font-weight:400;transform:scaleX(1.0126);transform-origin:0 0;">18.11.2024</div>
<div class="t" style="left:749.20px;top:613.82px;font-size:14.5px;color:#303438;font-weight:400;transform:scaleX(0.9951);transform-origin:0 0;">08:00</div>
<div class="t" style="left:903.10px;top:613.82px;font-size:14.5px;color:#303438;font-weight:400;transform:scaleX(0.9604);transform-origin:0 0;">HIS1010</div>
<div class="t" style="left:1075.30px;top:613.82px;font-size:14.5px;color:#303438;font-weight:400;transform:scaleX(0.9961);transform-origin:0 0;">Rasmus Salthella</div>
<div class="t" style="left:1242.00px;top:613.82px;font-size:14.5px;color:#303438;font-weight:400;transform:scaleX(1.0303);transform-origin:0 0;">Eleven følger ikke vanlige regler for god oppførsel. Spesifiser:</div>
<div class="r" style="left:1796px;top:604.1px;width:33px;height:33px;background:#fff;border:1px solid #7b8997;border-radius:3px;box-sizing:border-box;"></div>
<svg class="r" style="left:1804px;top:618.1px;" width="17" height="5" viewBox="0 0 17 5"><circle cx="3.2" cy="2.5" r="1.4" fill="#1b1d1f"/><circle cx="8.5" cy="2.5" r="1.4" fill="#1b1d1f"/><circle cx="14" cy="2.5" r="1.4" fill="#1b1d1f"/></svg>
<div class="r" style="left:217px;top:650px;width:1671px;height:57px;background:#f3f4f6;"></div>
<div class="r" style="left:217px;top:707px;width:1671px;height:1px;background:#eceef1;"></div>
<div class="t" style="left:228.50px;top:671.82px;font-size:14.5px;color:#303438;font-weight:400;transform:scaleX(1.0072);transform-origin:0 0;">Ingebrigt Joensen</div>
<div class="t" style="left:394.00px;top:671.82px;font-size:14.5px;color:#303438;font-weight:400;transform:scaleX(1.0274);transform-origin:0 0;">Orden</div>
<div class="t" style="left:582.20px;top:671.82px;font-size:14.5px;color:#303438;font-weight:400;transform:scaleX(0.9976);transform-origin:0 0;">13.01.2025</div>
<div class="t" style="left:749.20px;top:671.82px;font-size:14.5px;color:#303438;font-weight:400;transform:scaleX(0.9951);transform-origin:0 0;">08:00</div>
<div class="t" style="left:903.10px;top:671.82px;font-size:14.5px;color:#303438;font-weight:400;transform:scaleX(0.9604);transform-origin:0 0;">HIS1010</div>
<div class="t" style="left:1075.30px;top:671.82px;font-size:14.5px;color:#303438;font-weight:400;transform:scaleX(0.9961);transform-origin:0 0;">Rasmus Salthella</div>
<div class="t" style="left:1242.00px;top:671.82px;font-size:14.5px;color:#303438;font-weight:400;transform:scaleX(1.0497);transform-origin:0 0;">Eleven kom for seint til timen.</div>
<div class="r" style="left:1796px;top:662.1px;width:33px;height:33px;background:#fff;border:1px solid #7b8997;border-radius:3px;box-sizing:border-box;"></div>
<svg class="r" style="left:1804px;top:676.1px;" width="17" height="5" viewBox="0 0 17 5"><circle cx="3.2" cy="2.5" r="1.4" fill="#1b1d1f"/><circle cx="8.5" cy="2.5" r="1.4" fill="#1b1d1f"/><circle cx="14" cy="2.5" r="1.4" fill="#1b1d1f"/></svg>
<div class="r" style="left:217px;top:765px;width:1671px;height:1px;background:#eceef1;"></div>
<div class="t" style="left:228.50px;top:729.82px;font-size:14.5px;color:#303438;font-weight:400;transform:scaleX(1.0072);transform-origin:0 0;">Ingebrigt Joensen</div>
<div class="t" style="left:394.00px;top:729.82px;font-size:14.5px;color:#303438;font-weight:400;transform:scaleX(1.0274);transform-origin:0 0;">Orden</div>
<div class="t" style="left:582.20px;top:729.82px;font-size:14.5px;color:#303438;font-weight:400;transform:scaleX(0.9976);transform-origin:0 0;">06.01.2025</div>
<div class="t" style="left:749.20px;top:729.82px;font-size:14.5px;color:#303438;font-weight:400;transform:scaleX(0.9951);transform-origin:0 0;">08:00</div>
<div class="t" style="left:903.10px;top:729.82px;font-size:14.5px;color:#303438;font-weight:400;transform:scaleX(0.9604);transform-origin:0 0;">HIS1010</div>
<div class="t" style="left:1075.30px;top:729.82px;font-size:14.5px;color:#303438;font-weight:400;transform:scaleX(0.9961);transform-origin:0 0;">Rasmus Salthella</div>
<div class="t" style="left:1242.00px;top:729.82px;font-size:14.5px;color:#303438;font-weight:400;transform:scaleX(1.0454);transform-origin:0 0;">Eleven har ikke levert arbeid innen frist.</div>
<div class="r" style="left:1796px;top:720.1px;width:33px;height:33px;background:#fff;border:1px solid #7b8997;border-radius:3px;box-sizing:border-box;"></div>
<svg class="r" style="left:1804px;top:734.1px;" width="17" height="5" viewBox="0 0 17 5"><circle cx="3.2" cy="2.5" r="1.4" fill="#1b1d1f"/><circle cx="8.5" cy="2.5" r="1.4" fill="#1b1d1f"/><circle cx="14" cy="2.5" r="1.4" fill="#1b1d1f"/></svg>
<div class="r" style="left:217px;top:766px;width:1671px;height:57px;background:#f3f4f6;"></div>
<div class="r" style="left:217px;top:823px;width:1671px;height:1px;background:#eceef1;"></div>
<div class="t" style="left:228.50px;top:787.82px;font-size:14.5px;color:#303438;font-weight:400;transform:scaleX(1.0072);transform-origin:0 0;">Ingebrigt Joensen</div>
<div class="t" style="left:394.00px;top:787.82px;font-size:14.5px;color:#303438;font-weight:400;transform:scaleX(1.0274);transform-origin:0 0;">Orden</div>
<div class="t" style="left:582.20px;top:787.82px;font-size:14.5px;color:#303438;font-weight:400;transform:scaleX(0.9976);transform-origin:0 0;">03.01.2025</div>
<div class="t" style="left:749.20px;top:787.82px;font-size:14.5px;color:#303438;font-weight:400;transform:scaleX(0.9951);transform-origin:0 0;">08:00</div>
<div class="t" style="left:903.10px;top:787.82px;font-size:14.5px;color:#303438;font-weight:400;transform:scaleX(0.9344);transform-origin:0 0;">REL1003</div>
<div class="t" style="left:1075.30px;top:787.82px;font-size:14.5px;color:#303438;font-weight:400;transform:scaleX(0.9961);transform-origin:0 0;">Rasmus Salthella</div>
<div class="t" style="left:1242.00px;top:787.82px;font-size:14.5px;color:#303438;font-weight:400;transform:scaleX(1.0414);transform-origin:0 0;">Eleven har glemt nødvendig utstyr.</div>
<div class="r" style="left:1796px;top:778.1px;width:33px;height:33px;background:#fff;border:1px solid #7b8997;border-radius:3px;box-sizing:border-box;"></div>
<svg class="r" style="left:1804px;top:792.1px;" width="17" height="5" viewBox="0 0 17 5"><circle cx="3.2" cy="2.5" r="1.4" fill="#1b1d1f"/><circle cx="8.5" cy="2.5" r="1.4" fill="#1b1d1f"/><circle cx="14" cy="2.5" r="1.4" fill="#1b1d1f"/></svg>
<div class="r" style="left:217px;top:888px;width:1671px;height:1px;background:#eceef1;"></div>
<div class="t" style="left:228.50px;top:849.32px;font-size:14.5px;color:#303438;font-weight:400;transform:scaleX(1.0072);transform-origin:0 0;">Ingebrigt Joensen</div>
<div class="t" style="left:394.00px;top:849.32px;font-size:14.5px;color:#303438;font-weight:400;transform:scaleX(1.0321);transform-origin:0 0;">Oppførsel</div>
<div class="t" style="left:582.20px;top:849.32px;font-size:14.5px;color:#303438;font-weight:400;transform:scaleX(0.9976);transform-origin:0 0;">13.01.2025</div>
<div class="t" style="left:749.20px;top:849.32px;font-size:14.5px;color:#303438;font-weight:400;transform:scaleX(0.9978);transform-origin:0 0;">12:00</div>
<div class="t" style="left:1075.30px;top:849.32px;font-size:14.5px;color:#303438;font-weight:400;transform:scaleX(1.0250);transform-origin:0 0;">Ferdinand Micael</div>
<div class="t" style="left:1242.00px;top:838.92px;font-size:14.5px;color:#303438;font-weight:400;transform:scaleX(1.0495);transform-origin:0 0;">Spesifiser: Eleven har tatt bilde eller gjort lyd- eller filmopptak av andre uten</div>
<div class="t" style="left:1242.00px;top:859.22px;font-size:14.5px;color:#303438;font-weight:400;transform:scaleX(1.0443);transform-origin:0 0;">deres tillatelse.</div>
<div class="r" style="left:1796px;top:840.2px;width:33px;height:33px;background:#fff;border:1px solid #7b8997;border-radius:3px;box-sizing:border-box;"></div>
<svg class="r" style="left:1804px;top:854.2px;" width="17" height="5" viewBox="0 0 17 5"><circle cx="3.2" cy="2.5" r="1.4" fill="#1b1d1f"/><circle cx="8.5" cy="2.5" r="1.4" fill="#1b1d1f"/><circle cx="14" cy="2.5" r="1.4" fill="#1b1d1f"/></svg>
<div class="r" style="left:217px;top:889px;width:1671px;height:57px;background:#f3f4f6;"></div>
<div class="r" style="left:217px;top:946px;width:1671px;height:1px;background:#eceef1;"></div>
<div class="t" style="left:228.50px;top:910.82px;font-size:14.5px;color:#303438;font-weight:400;transform:scaleX(1.0113);transform-origin:0 0;">Vibecke Gjertsen</div>
<div class="t" style="left:394.00px;top:910.82px;font-size:14.5px;color:#303438;font-weight:400;transform:scaleX(1.0274);transform-origin:0 0;">Orden</div>
<div class="t" style="left:582.20px;top:910.82px;font-size:14.5px;color:#303438;font-weight:400;transform:scaleX(0.9976);transform-origin:0 0;">21.08.2024</div>
<div class="t" style="left:749.20px;top:910.82px;font-size:14.5px;color:#303438;font-weight:400;transform:scaleX(0.9978);transform-origin:0 0;">12:00</div>
<div class="t" style="left:1075.30px;top:910.82px;font-size:14.5px;color:#303438;font-weight:400;transform:scaleX(0.9961);transform-origin:0 0;">Rasmus Salthella</div>
<div class="t" style="left:1242.00px;top:910.82px;font-size:14.5px;color:#303438;font-weight:400;transform:scaleX(1.0467);transform-origin:0 0;">Annet orden</div>
<div class="r" style="left:1796px;top:901.1px;width:33px;height:33px;background:#fff;border:1px solid #7b8997;border-radius:3px;box-sizing:border-box;"></div>
<svg class="r" style="left:1804px;top:915.1px;" width="17" height="5" viewBox="0 0 17 5"><circle cx="3.2" cy="2.5" r="1.4" fill="#1b1d1f"/><circle cx="8.5" cy="2.5" r="1.4" fill="#1b1d1f"/><circle cx="14" cy="2.5" r="1.4" fill="#1b1d1f"/></svg>
<div class="t" style="left:228.50px;top:968.82px;font-size:14.5px;color:#303438;font-weight:400;transform:scaleX(1.0163);transform-origin:0 0;">Reidar Haugland</div>
<div class="t" style="left:394.00px;top:968.82px;font-size:14.5px;color:#303438;font-weight:400;transform:scaleX(1.0274);transform-origin:0 0;">Orden</div>
<div class="t" style="left:582.20px;top:968.82px;font-size:14.5px;color:#303438;font-weight:400;transform:scaleX(0.9976);transform-origin:0 0;">21.08.2024</div>
<div class="t" style="left:749.20px;top:968.82px;font-size:14.5px;color:#303438;font-weight:400;transform:scaleX(0.9978);transform-origin:0 0;">12:00</div>
<div class="t" style="left:1075.30px;top:968.82px;font-size:14.5px;color:#303438;font-weight:400;transform:scaleX(0.9961);transform-origin:0 0;">Rasmus Salthella</div>
<div class="t" style="left:1242.00px;top:968.82px;font-size:14.5px;color:#303438;font-weight:400;transform:scaleX(1.0467);transform-origin:0 0;">Annet orden</div>
<div class="r" style="left:1796px;top:959.1px;width:33px;height:33px;background:#fff;border:1px solid #7b8997;border-radius:3px;box-sizing:border-box;"></div>
<svg class="r" style="left:1804px;top:973.1px;" width="17" height="5" viewBox="0 0 17 5"><circle cx="3.2" cy="2.5" r="1.4" fill="#1b1d1f"/><circle cx="8.5" cy="2.5" r="1.4" fill="#1b1d1f"/><circle cx="14" cy="2.5" r="1.4" fill="#1b1d1f"/></svg>
<div class="t" style="left:233.05px;top:1036.72px;font-size:14.5px;color:#2b2f33;font-weight:400;transform:scaleX(1.0444);transform-origin:0 0;">1 - 10 av 11 rader totalt</div>
<div class="t" style="left:1501.50px;top:1036.82px;font-size:14.5px;color:#2b2f33;font-weight:400;transform:scaleX(1.0147);transform-origin:0 0;">Rader per side</div>
<div class="r" style="left:1613px;top:1029px;width:73px;height:34px;background:#fff;border:1px solid #cfd4d9;border-radius:5px;box-sizing:border-box;"></div>
<div class="t" style="left:1630.10px;top:1040.32px;font-size:14.5px;color:#1b6cb0;font-weight:400;transform:scaleX(0.9055);transform-origin:0 0;">10</div>
<svg class="r" style="left:1669px;top:1040px;" width="14" height="12" viewBox="0 0 14 12"><path d="M3 4l4 4 4-4" fill="none" stroke="#0d5799" stroke-width="2.1"/></svg>
<svg class="r" style="left:1696px;top:1038px;" width="14" height="18" viewBox="0 0 14 18"><path d="M10 2l-6.5 7 6.5 7" fill="none" stroke="#c5cbd1" stroke-width="1.6"/></svg>
<div class="r" style="left:1720px;top:1029px;width:118px;height:34px;background:#fff;border:1px solid #cfd4d9;border-radius:5px;box-sizing:border-box;"></div>
<div class="t" style="left:1736.50px;top:1040.32px;font-size:14.5px;color:#1b6cb0;font-weight:400;transform:scaleX(0.9470);transform-origin:0 0;">Side 1 av 2</div>
<svg class="r" style="left:1821px;top:1040px;" width="14" height="12" viewBox="0 0 14 12"><path d="M3 4l4 4 4-4" fill="none" stroke="#0d5799" stroke-width="2.1"/></svg>
<svg class="r" style="left:1848px;top:1038px;" width="14" height="18" viewBox="0 0 14 18"><path d="M4 2l6.5 7L4 16" fill="none" stroke="#1b72c0" stroke-width="1.7"/></svg>
<div class="r" style="left:267px;top:140px;width:40px;height:40px;border-radius:50%;background:#e34846;box-shadow:0 1.5px 2px rgba(0,0,0,.35);"></div>
<svg class="r" style="left:276px;top:140px;" width="20" height="40" viewBox="0 0 20 40"><path d="M11.6 8.2h2.4v21.6h-2.9V13.2c0-.9 0-1.9.1-2.9-.6.6-1.1 1-1.7 1.5l-2.6 2.1-1.6-2z" fill="#fff"/></svg>
<div class="r" style="left:365px;top:140px;width:40px;height:40px;border-radius:50%;background:#e34846;box-shadow:0 1.5px 2px rgba(0,0,0,.35);"></div>
<div class="t" style="left:376.50px;top:144.59px;font-size:30px;color:#fff;font-weight:400;">2</div>
<svg class="r" style="left:1660px;top:110px;" width="150" height="150" viewBox="0 0 150 150"><defs><filter id="sh" x="-20%" y="-20%" width="140%" height="140%"><feDropShadow dx="-1.2" dy="1.8" stdDeviation="1.4" flood-color="#000" flood-opacity=".45"/></filter></defs><g filter="url(#sh)"><line x1="19.5" y1="17.5" x2="112" y2="109" stroke="#e84a45" stroke-width="10.5" stroke-linecap="round"/><path d="M133 129.6L102.4 119.3 122.5 99.2z" fill="#e84a45"/></g></svg>
</body></html>
